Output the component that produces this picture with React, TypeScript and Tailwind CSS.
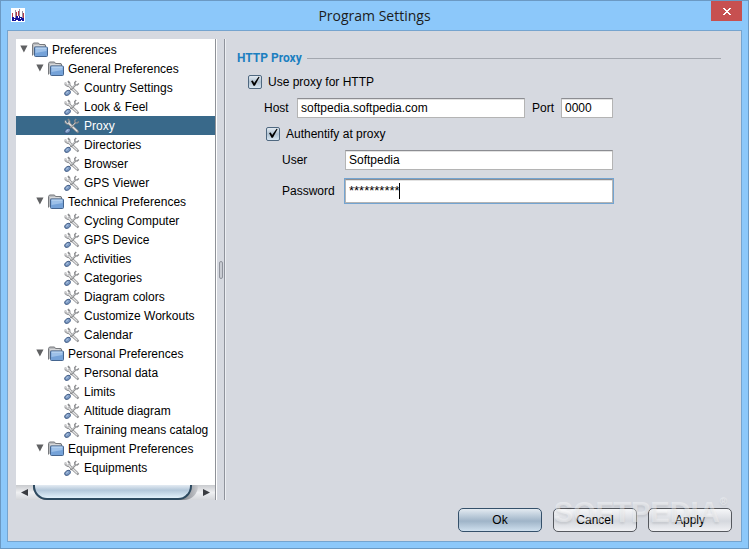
import { useState } from 'react'

type Section = { title: string; items: string[] }

const sections: Section[] = [
  {
    title: 'General Preferences',
    items: ['Country Settings', 'Look & Feel', 'Proxy', 'Directories', 'Browser', 'GPS Viewer'],
  },
  {
    title: 'Technical Preferences',
    items: [
      'Cycling Computer',
      'GPS Device',
      'Activities',
      'Categories',
      'Diagram colors',
      'Customize Workouts',
      'Calendar',
    ],
  },
  {
    title: 'Personal Preferences',
    items: ['Personal data', 'Limits', 'Altitude diagram', 'Training means catalog'],
  },
  { title: 'Equipment Preferences', items: ['Equipments'] },
]

const inputClass =
  'h-5 min-w-0 border border-[#b4b4b4] border-t-[#8c8d92] bg-white px-[3px] text-black shadow-[inset_0_1px_0_#e2e2e2] outline-none'

const plainButton =
  'border-[#55585e] bg-linear-to-b from-[#f6f7f9] via-[#d5d8de] via-55% to-[#f0f1f4]'
const defaultButton =
  'border-[#34506a] bg-linear-to-b from-[#e3eaf1] via-[#9fb4c8] via-55% to-[#cfe0ee]'

function AppIcon() {
  return (
    <svg width="14" height="14" viewBox="0 0 14 14" shapeRendering="crispEdges">
      <path fill="#fff" d="M0 0h14v14H0z" />
      <path fill="#9a8f9f" d="M4 2h1v8H4zM8 1h1v8H8zM11 3h1v7h-1z" />
      <path fill="#b23a48" d="M1 5h1v5H1zM5 4h1v5H5zM7 3h1v5H7zM12 5h1v5h-1z" />
      <path fill="#14149c" d="M1 9h2v1h2V8h2v2h1V8h1v1h2v1h2v3h-2v-1h-1v1H7v-1H5v1H1z" />
      <path fill="#fff" d="M3 11h1v1H3zM9 10h1v1H9z" />
    </svg>
  )
}

function FolderIcon() {
  return (
    <svg width="16" height="16" viewBox="0 0 16 16" className="shrink-0">
      <path d="M.5 13.5v-11l1-1.5h5l1 1.5h5.5l.5.5v2" fill="#b9bbbe" stroke="#77797d" />
      <path d="M2 3.5h9.5" stroke="#d7d8da" />
      <rect x="2.5" y="5" width="13" height="9.5" rx="1" fill="#75a2d8" stroke="#45658f" />
      <path d="M3.5 6h11v3l-11 2z" fill="#9dc0e8" />
      <path d="M3.5 6h11" stroke="#c5dbf2" />
    </svg>
  )
}

function ToolsIcon() {
  return (
    <svg width="16" height="16" viewBox="0 0 16 16" className="shrink-0" fill="none">
      <path d="M5 5.5l8 7.5" stroke="#8a8b8e" strokeWidth="2.8" strokeLinecap="round" />
      <path d="M1.5 2.5v2l2 1.5 2-1v-2L4 1.2" stroke="#8a8b8e" strokeWidth="1.8" />
      <path d="M5 5.5l8 7.5" stroke="#e6e6e6" strokeWidth="1.4" strokeLinecap="round" />
      <path d="M1.6 2.8v1.5l1.9 1.2 1.6-.8V3.2" stroke="#e6e6e6" strokeWidth=".8" />
      <path d="M6.5 10l5-5.2" stroke="#77797c" strokeWidth="1.8" />
      <path d="M12.2 1l-1.5 1.6.4 2 2 .5L14.9 3.4" stroke="#8a8b8e" strokeWidth="1.4" />
      <path d="M7 9.3l4.5-4.6" stroke="#e6e6e6" strokeWidth=".8" />
      <path d="M13.3 14.8l1.5-1.5" stroke="#8a8b8e" strokeWidth="1.2" />
      <path
        d="M1 14.8c-.8-1 0-3 1.3-3.6 1.1-.9 2.6-1.2 3.6-.5.9 1.2.5 2.5-.5 3.5-1.2 1.2-3.4 1.6-4.4.6z"
        fill="#7f9dc6"
        stroke="#38547f"
      />
      <path d="M2.2 13.3l2-1.6" stroke="#b7cbe6" />
    </svg>
  )
}

function Expander() {
  return (
    <svg width="8" height="8" viewBox="0 0 8 8" className="mb-[2px] shrink-0">
      <path d="M.3.5h7.2L3.9 7.5z" fill="#606163" />
    </svg>
  )
}

function CheckBox({ label, checked, onChange }: { label: string; checked: boolean; onChange: () => void }) {
  return (
    <label className="flex items-center gap-[6px]">
      <span className="grid">
        <input
          type="checkbox"
          checked={checked}
          onChange={onChange}
          className="col-start-1 row-start-1 size-[14px] appearance-none rounded-[2px] border border-[#4f6880] bg-linear-to-b from-[#e3eaf1] via-[#b0c2d2] to-[#d8e6f1]"
        />
        {checked && (
          <svg
            width="14"
            height="14"
            viewBox="0 0 14 14"
            className="pointer-events-none col-start-1 row-start-1"
          >
            <path d="M3 6l1.8-.5 1.3 2.4L10.6 1.8l1 .2L6.9 10.8H5.5z" fill="#000" />
          </svg>
        )}
      </span>
      {label}
    </label>
  )
}

function PreferenceTree({ selected, onSelect }: { selected: string; onSelect: (s: string) => void }) {
  return (
    <div className="flex w-[200px] shrink-0 flex-col border-r border-[#8f9298] bg-white">
      <ul className="flex-1 overflow-hidden pt-px whitespace-nowrap">
        <li>
          <button className="flex h-[19px] w-full items-center gap-1 pl-1">
            <Expander />
            <FolderIcon />
            Preferences
          </button>
          <ul>
            {sections.map((section) => (
              <li key={section.title}>
                <button className="flex h-[19px] w-full items-center gap-1 pl-5">
                  <Expander />
                  <FolderIcon />
                  {section.title}
                </button>
                <ul>
                  {section.items.map((item) => (
                    <li key={item}>
                      <button
                        onClick={() => onSelect(item)}
                        className={`flex h-[19px] w-full items-center gap-1 pl-12 ${
                          item === selected ? 'bg-[#39698a] text-white' : ''
                        }`}
                      >
                        <ToolsIcon />
                        {item}
                      </button>
                    </li>
                  ))}
                </ul>
              </li>
            ))}
          </ul>
        </li>
      </ul>

      <div className="flex h-[15px] bg-linear-to-b from-[#c9cbcf] via-[#eff0f2] to-[#d4d6da]">
        <button aria-label="Scroll left" className="grid w-[17px] place-items-center">
          <svg width="7" height="7" viewBox="0 0 7 7">
            <path d="M7 0v7L0 3.5z" fill="#3a3c40" />
          </svg>
        </button>
        <div className="flex flex-1 rounded-b-[14px] bg-linear-to-r from-[#808389] from-90% to-[#c9cbcf]">
          <div className="mr-[6px] flex-1 rounded-b-[14px] border-x-2 border-b-2 border-[#2d4a60] bg-linear-to-b from-[#e4ebf2] via-[#b3c7da] via-40% to-[#e2f1fb]" />
        </div>
        <button aria-label="Scroll right" className="grid w-[17px] place-items-center">
          <svg width="7" height="7" viewBox="0 0 7 7">
            <path d="M0 0v7l7-3.5z" fill="#3a3c40" />
          </svg>
        </button>
      </div>
    </div>
  )
}

export default function App() {
  const [selected, setSelected] = useState('Proxy')
  const [useProxy, setUseProxy] = useState(true)
  const [authentify, setAuthentify] = useState(true)
  const [host, setHost] = useState('softpedia.softpedia.com')
  const [port, setPort] = useState('0000')
  const [user, setUser] = useState('Softpedia')
  const [password, setPassword] = useState('**********')

  return (
    <div className="flex min-h-screen flex-col border border-[#6b99c3] bg-[#8cc8fa] px-[6px] pb-[6px] font-['Liberation_Sans',Arial,sans-serif] text-[12px] leading-4 text-black">
      <header className="flex h-[29px] items-start">
        <div className="w-[31px] pt-[7px] pl-1">
          <AppIcon />
        </div>
        <h1 className="flex-1 text-center font-['Open_Sans',sans-serif] text-[14px] leading-[30px] text-[#1c1c1c]">
          Program Settings
        </h1>
        <button aria-label="Close" className="grid h-5 w-[31px] place-items-center bg-[#c75050]">
          <svg width="8" height="7" viewBox="0 0 8 7" shapeRendering="crispEdges">
            <path
              d="M0 0h2v1h1v1h2V1h1V0h2v1H7v1H6v1H5v1h1v1h1v1h1v1H6V6H5V5H3v1H2v1H0V6h1V5h1V4h1V3H2V2H1V1H0z"
              fill="#fff"
            />
          </svg>
        </button>
      </header>

      <div className="flex flex-1 flex-col border border-[#75a4cf] bg-[#d6d9e0] pt-2 pb-[9px] pl-2">
        <div className="flex flex-1">
          <PreferenceTree selected={selected} onSelect={setSelected} />

          <div className="flex w-[9px] shrink-0 items-center justify-center border-r border-l border-l-white border-r-[#8f939c]">
            <div className="h-[18px] w-1 rounded-[2px] border border-[#8f939c] bg-[#c9ccd3]" />
          </div>

          <main className="flex-1 border-l border-[#eceef2] pt-[11px] pr-5 pl-[11px]">
            <div className="flex items-center gap-[5px]">
              <h2 className="font-['Roboto',sans-serif] text-[12px] font-bold text-[#1c7fc0]">HTTP Proxy</h2>
              <div className="h-px flex-1 bg-[#a3a7af]" />
            </div>

            <div className="mt-2 pl-[11px]">
              <CheckBox label="Use proxy for HTTP" checked={useProxy} onChange={() => setUseProxy(!useProxy)} />
            </div>

            <div className="mt-2 flex w-[376px] items-center pl-[27px]">
              <label htmlFor="host" className="w-[33px]">
                Host
              </label>
              <input
                id="host"
                value={host}
                onChange={(e) => setHost(e.target.value)}
                className={`${inputClass} flex-1`}
              />
              <label htmlFor="port" className="w-9 pl-[7px]">
                Port
              </label>
              <input
                id="port"
                value={port}
                onChange={(e) => setPort(e.target.value)}
                className={`${inputClass} w-[52px]`}
              />
            </div>

            <div className="mt-2 pl-[29px]">
              <CheckBox
                label="Authentify at proxy"
                checked={authentify}
                onChange={() => setAuthentify(!authentify)}
              />
            </div>

            <div className="mt-2 flex w-[376px] items-center pl-[45px]">
              <label htmlFor="user" className="w-[63px]">
                User
              </label>
              <input
                id="user"
                value={user}
                onChange={(e) => setUser(e.target.value)}
                className={`${inputClass} flex-1`}
              />
            </div>

            <div className="mt-[9px] flex w-[376px] items-center pl-[45px]">
              <label htmlFor="password" className="w-[63px]">
                Password
              </label>
              <div className="relative flex h-6 flex-1 ring-1 ring-[#73a4d1]">
                <input
                  id="password"
                  value={password}
                  onChange={(e) => setPassword(e.target.value)}
                  className="w-full min-w-0 border border-[#b4b4b4] border-t-[#8c8d92] bg-white px-[3px] text-[13px] shadow-[inset_0_1px_0_#e2e2e2] outline-none"
                />
                <span className="absolute top-1 left-[54px] h-4 w-px bg-black" />
              </div>
            </div>
          </main>
        </div>

        <div className="relative flex justify-end gap-[11px] pt-2 pr-[9px]">
          <button className={`h-6 w-[84px] rounded-[5px] border ${defaultButton}`}>Ok</button>
          <button className={`h-6 w-[84px] rounded-[5px] border ${plainButton}`}>Cancel</button>
          <button className={`h-6 w-[84px] rounded-[5px] border ${plainButton}`}>Apply</button>
          <div className="pointer-events-none absolute -top-1 right-[14px] flex items-start text-[29px] leading-8 font-bold text-white/40 [text-shadow:0_2px_2px_rgb(0_0_0/0.08)]">
            SOFTPEDIA<span className="text-[10px] leading-3">®</span>
          </div>
        </div>
      </div>
    </div>
  )
}
